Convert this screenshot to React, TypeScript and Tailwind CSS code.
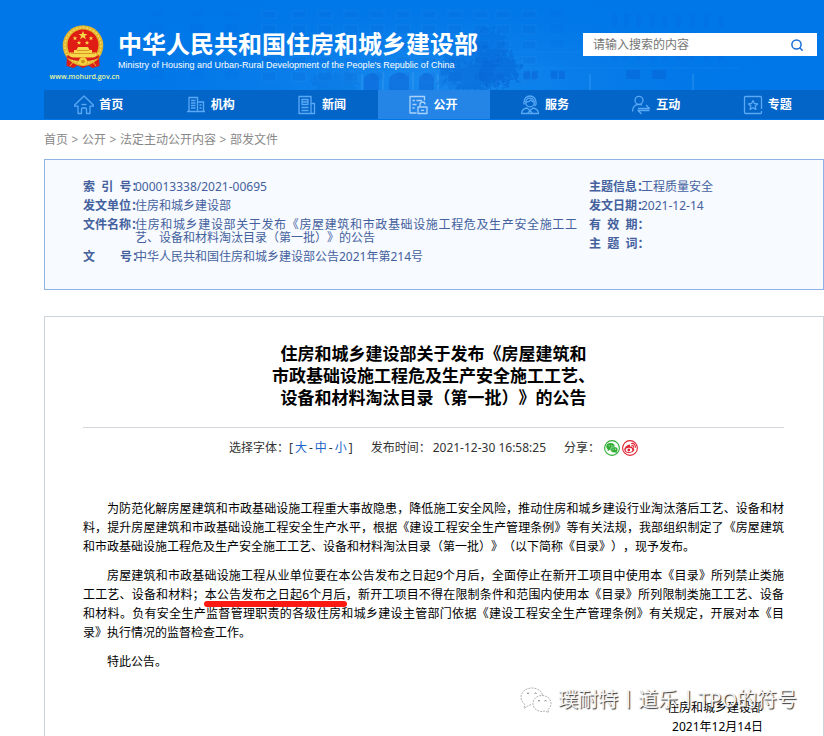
import React from 'react';

const iconBox = 'size-5 text-[#5aa9f5]';

const HomeIcon = () => (
    <svg className={iconBox} viewBox="0 0 20 20" fill="none" stroke="currentColor" strokeWidth="1.3" strokeLinejoin="round">
        <path d="M.7 10 10 1l9.300 9v1.200H16v7.300h-3.500V14a1 1 0 0 0-1-1h-3a1 1 0 0 0-1 1v4.500H4v-7.300H.7z" />
        <path d="M7.500 9.500h5" />
    </svg>
);

const OrgIcon = () => (
    <svg className={iconBox} viewBox="0 0 20 20" fill="none" stroke="currentColor" strokeWidth="1.3">
        <path d="M1 16.500h18M3 16.500V2.500h8.500v14M11.500 7h6v9.500" />
        <path d="M5 5.500h4.500M5 8h4.500M5 10.500h4.500M5 13h4.500M13.500 10h2M13.500 13h2" />
    </svg>
);

const NewsIcon = () => (
    <svg className={iconBox} viewBox="0 0 20 20" fill="none" stroke="currentColor" strokeWidth="1.3" strokeLinejoin="round">
        <path d="M2 1.500h12v17H2zM14 8.500h3.500v10H14" />
        <path d="M5 4.500h6v5H5zM5 7h6M4.500 12.500h7M4.500 15.500h7" />
    </svg>
);

const OpenIcon = () => (
    <svg className="size-5 text-[#a9d2fb]" viewBox="0 0 20 20" fill="none" stroke="currentColor" strokeWidth="1.3" strokeLinejoin="round">
        <path d="M16.500 5.500v-4H2v16.500h6.500" />
        <path d="M4.500 5.500h2.500M8.500 5.500h5.500M4.500 9.500h4M4.500 13h2" />
        <path d="M10 12h9v6.500h-9zM12 12V9.500a2.500 2.500 0 0 1 5 0M13 15.300h3" />
    </svg>
);

const ServiceIcon = () => (
    <svg className={iconBox} viewBox="0 0 20 20" fill="none" stroke="currentColor" strokeWidth="1.3" strokeLinejoin="round">
        <circle cx="10" cy="7.500" r="4.300" />
        <path d="M4 9.500V7a6 6 0 0 1 12 0v2.500l-1.500 1.500M6 7c3 0 4-1 5-2.200 1 1.500 2 2 3 2.200" />
        <path d="M1.500 18.500c.3-3.500 2.500-5 5.500-5.500l3 2.500 3-2.500c3 .5 5.200 2 5.500 5.500zM8 18l2-2.500 2 2.500" />
    </svg>
);

const InteractIcon = () => (
    <svg className={iconBox} viewBox="0 0 20 20" fill="none" stroke="currentColor" strokeWidth="1.3" strokeLinejoin="round">
        <circle cx="8" cy="5.300" r="4" />
        <path d="M1.500 16.500C1.500 12 4 9.500 8 9.300c1.200 0 2.200.3 3 .8" />
        <path d="M7 13.500h11.500L15 10M18.500 15.500H7l3.500 3.500" />
    </svg>
);

const TopicIcon = () => (
    <svg className={iconBox} viewBox="0 0 20 20" fill="none" stroke="currentColor" strokeWidth="1.3" strokeLinejoin="round">
        <path d="M18.500 14V2.500a1 1 0 0 0-1-1h-15a1 1 0 0 0-1 1v15a1 1 0 0 0 1 1h15a1 1 0 0 0 1-1V16" />
        <path d="m10 5.500 1.400 3 3.200.4-2.400 2.200.7 3.300-2.900-1.700-2.900 1.700.7-3.300-2.400-2.200 3.200-.4z" />
    </svg>
);

const navItems = [
    { name: '首页', icon: HomeIcon },
    { name: '机构', icon: OrgIcon },
    { name: '新闻', icon: NewsIcon },
    { name: '公开', icon: OpenIcon, active: true },
    { name: '服务', icon: ServiceIcon },
    { name: '互动', icon: InteractIcon },
    { name: '专题', icon: TopicIcon },
];

const crumbs = ['首页', '公开', '法定主动公开内容', '部发文件'];

const leftInfo = [
    { label: '索\u00a0\u00a0引\u00a0\u00a0号', value: '000013338/2021-00695' },
    { label: '发文单位', value: '住房和城乡建设部' },
    { label: '文件名称', value: '住房和城乡建设部关于发布《房屋建筑和市政基础设施工程危及生产安全施工工艺、设备和材料淘汰目录（第一批）》的公告' },
    { label: '文\u00a0\u00a0\u00a0\u00a0\u00a0\u00a0\u00a0\u00a0号', value: '中华人民共和国住房和城乡建设部公告2021年第214号' },
];

const rightInfo = [
    { label: '主题信息', value: '工程质量安全' },
    { label: '发文日期', value: '2021-12-14' },
    { label: '有\u00a0\u00a0效\u00a0\u00a0期', value: '' },
    { label: '主\u00a0\u00a0题\u00a0\u00a0词', value: '' },
];

const Emblem = () => (
    <svg className="h-11 w-[42px]" viewBox="0 0 42 44">
        <path d="M5 29 4.500 41l7 2 4-2.500 5.500 2.500 5.500-2.500 4 2.500 7-2L37 29z" fill="#d8201a" />
        <circle cx="21" cy="20.500" r="20.300" fill="#e3b52c" />
        <circle cx="21" cy="20.500" r="18" fill="none" stroke="#f3d964" strokeWidth="1.500" strokeDasharray="2 1.500" />
        <circle cx="21" cy="20" r="15.500" fill="#e01d14" />
        <path d="m21 6 1.200 3h3.200l-2.500 2 1 3.200-2.900-2-2.900 2 1-3.200-2.500-2h3.200z" fill="#f6d84a" />
        <g fill="#f6d84a">
            <path d="m13 11 .6 1.500h1.600l-1.200 1 .4 1.700-1.400-1-1.400 1 .4-1.700-1.200-1h1.600z" />
            <path d="m29 11 .6 1.500h1.600l-1.200 1 .4 1.700-1.400-1-1.400 1 .4-1.700-1.200-1h1.600z" />
            <path d="m17 15.500.6 1.500h1.600l-1.200 1 .4 1.700-1.400-1-1.400 1 .4-1.700-1.200-1h1.600z" />
            <path d="m25 15.500.6 1.500h1.600l-1.200 1 .4 1.700-1.400-1-1.400 1 .4-1.700-1.200-1h1.600z" />
            <path d="M16 22h10l1.500 3H30v2.500h4l1 5H7l1-5h4V25h2.500z" />
        </g>
        <path d="M9 28.500h24M15 25.500h12" stroke="#d0871b" strokeWidth=".8" />
        <path d="M5 31c4 3 8 3.500 12 3.500M37 31c-4 3-8 3.500-12 3.500" fill="none" stroke="#d8201a" strokeWidth="2.500" />
        <circle cx="21" cy="36.500" r="4.200" fill="#f3cf3e" />
        <circle cx="21" cy="36.500" r="1.800" fill="#c98f1c" />
        <path d="M8 41l4-5M34 41l-4-5" fill="none" stroke="#f0b63a" strokeWidth="1" />
    </svg>
);

const bays = [262, 292, 318, 344, 370, 396, 422, 448, 474, 496, 522];
const smallBays = [612, 624, 636, 650, 662, 676, 690, 704, 718];

const Building = () => (
    <svg className="absolute inset-y-0 left-0 h-[90px] w-[824px]" viewBox="0 0 824 90">
        <defs>
            <radialGradient id="glow">
                <stop offset="0" stopColor="#2a97f2" stopOpacity=".6" />
                <stop offset="1" stopColor="#0077e8" stopOpacity="0" />
            </radialGradient>
            <filter id="leaves" x="-20%" y="-20%" width="140%" height="140%">
                <feTurbulence type="fractalNoise" baseFrequency=".2" numOctaves="3" seed="4" />
                <feDisplacementMap in="SourceGraphic" scale="24" xChannelSelector="R" yChannelSelector="G" />
                <feGaussianBlur stdDeviation=".7" />
            </filter>
        </defs>
        <ellipse cx="430" cy="80" rx="360" ry="95" fill="url(#glow)" />
        <path d="M150 52h430M220 68h520" stroke="#3fa2f4" strokeOpacity=".15" />
        {bays.map((x) => (
            <g key={x} fill="#0d63d6" fillOpacity=".16" stroke="#45a6f5" strokeOpacity=".16">
                <rect x={x} y="11" width="14" height="7" />
                <rect x={x} y="25" width="14" height="9" />
                <rect x={x} y="41" width="14" height="8" />
                <rect x={x} y="57" width="14" height="7" />
                <rect x={x} y="72" width="14" height="9" />
            </g>
        ))}
        {[550, 150, 190, 225].map((x) => (
            <g key={x} fill="#0d63d6" fillOpacity=".1">
                <rect x={x} y="10" width="14" height="7" />
                <rect x={x} y="24" width="14" height="9" />
                <rect x={x} y="40" width="14" height="8" />
                <rect x={x} y="70" width="14" height="9" />
            </g>
        ))}
        {smallBays.map((x) => (
            <g key={x} fill="#0d63d6" fillOpacity=".18">
                <rect x={x} y="14" width="5" height="13" />
                <rect x={x} y="56" width="5" height="5" />
            </g>
        ))}
        <g fill="#0b5fd2" fillOpacity=".45">
            <path d="M364 90V78q8-10 15 0v12zM389 90V78q10-11 20 0v12zM419 90V78q8-10 15 0v12z" />
            <rect x="524" y="71" width="6" height="8" />
            <rect x="532" y="71" width="6" height="8" />
            <rect x="551" y="71" width="6" height="8" />
            <rect x="559" y="71" width="6" height="8" />
            <rect x="626" y="70" width="14" height="9" />
            <rect x="652" y="70" width="14" height="9" />
        </g>
        <path d="M362 90V74M383 90V72M413 90V72M438 90V74M590 90V74M693 90V74" stroke="#4fabf5" strokeOpacity=".25" strokeWidth="2" />
        <g filter="url(#leaves)" fill="#0a5bcb">
            <ellipse cx="480" cy="68" rx="40" ry="22" fillOpacity=".25" />
            <ellipse cx="490" cy="48" rx="16" ry="20" fillOpacity=".22" />
            <ellipse cx="468" cy="78" rx="32" ry="14" fillOpacity=".22" />
            <ellipse cx="500" cy="72" rx="22" ry="12" fillOpacity=".2" />
            <ellipse cx="334" cy="82" rx="24" ry="12" fillOpacity=".16" />
        </g>
    </svg>
);

const WechatShare = () => (
    <svg className="size-4" viewBox="0 0 16 16">
        <circle cx="8" cy="8" r="7.400" fill="#fff" stroke="#2fae35" strokeWidth="1.100" />
        <ellipse cx="6.500" cy="6.500" rx="4.200" ry="3.500" fill="#2fae35" />
        <path d="m3.300 11.300 1-2.500 2 1z" fill="#2fae35" />
        <ellipse cx="10.200" cy="9.700" rx="3.700" ry="3" fill="#2fae35" stroke="#fff" strokeWidth=".5" />
        <path d="m12.700 13.300-2-1.200 2-1z" fill="#2fae35" />
        <path d="M5.200 5.800h.1M7.800 5.800h.1M9 9.200h.1M11.400 9.200h.1" stroke="#fff" strokeWidth=".9" strokeLinecap="round" />
    </svg>
);

const WeiboShare = () => (
    <svg className="size-4" viewBox="0 0 16 16" fill="none">
        <circle cx="8" cy="8" r="7.400" fill="#fff" stroke="#e02433" strokeWidth="1.100" />
        <path d="M7.500 4.500C5 5 2.300 7.500 2.300 9.700c0 2 2.200 3.300 4.700 3.300 3 0 5.300-1.600 5.300-3.400 0-1-.9-1.600-1.800-1.800.3-1.200-.8-1.600-2.600-1 .3-1 .3-2-.4-2.300z" fill="#e02433" />
        <ellipse cx="7" cy="9.900" rx="3.300" ry="2.100" fill="#fff" />
        <circle cx="6.800" cy="10" r="1.400" fill="#e02433" />
        <path d="M9.500 3.500c2.500-.5 4.300 1.500 3.700 4M9.800 5.300c1.300-.1 2 .7 1.700 1.900" stroke="#e02433" strokeWidth="1.100" strokeLinecap="round" />
    </svg>
);

const InfoRow: React.FC<{ label: string; value: string }> = ({ label, value }) => (
    <div className="flex py-[3px]">
        <dt className="w-[52px] shrink-0 whitespace-nowrap font-bold">{label}：</dt>
        <dd className="flex-1 text-justify">{value}</dd>
    </div>
);

const App: React.FC = () => {
    return (
        <div className="flex min-h-screen flex-col bg-white font-['Noto_Sans','Noto_Sans_CJK_SC',sans-serif] text-xs [text-spacing-trim:space-all]">
            <header className="relative overflow-hidden bg-[#0077e8] pl-11">
                <Building />
                <div className="relative flex h-[90px] items-start justify-between pr-[7px]">
                    <div className="flex">
                        <div className="flex w-[73px] flex-col items-center pt-[25px]">
                            <div className="flex h-11 justify-center pl-1"><Emblem /></div>
                            <a href="#" className="pl-2 font-['Open_Sans',sans-serif] text-[7px] leading-[15px] font-semibold text-[#e6f5a0]">www.mohurd.gov.cn</a>
                        </div>
                        <div className="pt-7 pl-px text-white">
                            <h1 className="text-2xl leading-[31px] font-bold whitespace-nowrap">中华人民共和国住房和城乡建设部</h1>
                            <p className="font-['Liberation_Sans',sans-serif] text-[9px] leading-3 whitespace-nowrap">Ministry of Housing and Urban-Rural Development of the People's Republic of China</p>
                        </div>
                    </div>
                    <form className="mt-[33px] flex h-[23px] w-[234px] bg-white" onSubmit={(e) => e.preventDefault()}>
                        <input type="text" aria-label="搜索" placeholder="请输入搜索的内容" className="min-w-0 flex-1 px-[10px] outline-none placeholder:text-[#757575]" />
                        <button type="submit" aria-label="提交搜索" className="flex w-10 items-center justify-center">
                            <svg className="size-3 text-[#1a6fd4]" viewBox="0 0 12 12" fill="none" stroke="currentColor" strokeWidth="1.500" strokeLinecap="round">
                                <circle cx="5.500" cy="5.500" r="4.600" />
                                <path d="m9 9 2.200 2.200" />
                            </svg>
                        </button>
                    </form>
                </div>
                <nav className="relative mb-px grid h-[29px] grid-cols-7 bg-[#0465c8]">
                    {navItems.map((item) => (
                        <a key={item.name} href="#" className={`flex items-center justify-center gap-[5px] pr-0.5 font-bold text-white ${item.active ? 'bg-[#2585e6]' : ''}`}>
                            <item.icon />
                            {item.name}
                        </a>
                    ))}
                </nav>
            </header>

            <div className="flex flex-1 flex-col pl-11">
                <div className="flex py-[10px] leading-[19px] text-[#888888]">
                    {crumbs.map((crumb, i) => (
                        <React.Fragment key={crumb}>
                            {i > 0 && <span className="w-[14px] text-center">&gt;</span>}
                            <a href="#">{crumb}</a>
                        </React.Fragment>
                    ))}
                </div>

                <section className="flex h-[131px] border border-[#8db2e3] bg-[#f7faff] pt-[17px] pr-10 pl-[38px] leading-[13px] text-[#44619d]">
                    <dl className="mr-3 flex-1">
                        {leftInfo.map((row) => <InfoRow key={row.label} {...row} />)}
                    </dl>
                    <dl className="w-[194px]">
                        {rightInfo.map((row) => <InfoRow key={row.label} {...row} />)}
                    </dl>
                </section>

                <article className="relative mt-[26px] flex-1 border border-b-0 border-[#ccd3dc] pt-[26px] pr-[39px] pl-[38px] text-black">
                    <h2 className="pb-[18px] text-center text-[17px] leading-[22px] font-bold">
                        住房和城乡建设部关于发布《房屋建筑和<br />
                        市政基础设施工程危及生产安全施工工艺、<br />
                        设备和材料淘汰目录（第一批）》的公告
                    </h2>
                    <div className="flex items-center justify-center border-t border-[#d3d6da] pt-[10px] leading-[19px] text-[#333333]">
                        <div className="mr-[18px] flex gap-0.5">
                            <span>选择字体：[</span>
                            <button type="button" className="text-[#1a66c8]">大</button>
                            <span>-</span>
                            <button type="button" className="text-[#1a66c8]">中</button>
                            <span>-</span>
                            <button type="button" className="text-[#1a66c8]">小</button>
                            <span>]</span>
                        </div>
                        <span className="mr-[18px]">发布时间：<span className="ml-0.5">2021-12-30 16:58:25</span></span>
                        <span className="mr-1">分享：</span>
                        <a href="#" aria-label="微信" className="mr-0.5"><WechatShare /></a>
                        <a href="#" aria-label="微博"><WeiboShare /></a>
                    </div>

                    <div className="space-y-[10px] pt-[42px] text-justify leading-[19px]">
                        <p className="indent-6">为防范化解房屋建筑和市政基础设施工程重大事故隐患，降低施工安全风险，推动住房和城乡建设行业淘汰落后工艺、设备和材料，提升房屋建筑和市政基础设施工程安全生产水平，根据《建设工程安全生产管理条例》等有关法规，我部组织制定了《房屋建筑和市政基础设施工程危及生产安全施工工艺、设备和材料淘汰目录（第一批）》（以下简称《目录》），现予发布。</p>
                        <p className="indent-6">房屋建筑和市政基础设施工程从业单位要在本公告发布之日起9个月后，全面停止在新开工项目中使用本《目录》所列禁止类施工工艺、设备和材料；<span className="relative after:absolute after:-inset-x-px after:-bottom-1 after:h-[6px] after:rounded-full after:bg-[#fb1a12]">本公告发布之日起6个月后</span>，新开工项目不得在限制条件和范围内使用本《目录》所列限制类施工工艺、设备和材料。负有安全生产监督管理职责的各级住房和城乡建设主管部门依据《建设工程安全生产管理条例》有关规定，开展对本《目录》执行情况的监督检查工作。</p>
                        <p className="indent-6">特此公告。</p>
                    </div>
                    <div className="pt-[27px] pr-[21px] text-right leading-[19px]">
                        <p>住房和城乡建设部</p>
                        <p>2021年12月14日</p>
                    </div>

                    <div className="absolute right-[26px] bottom-[20px] flex items-center gap-[6px] text-xl leading-8 whitespace-nowrap text-[#f4f4f4] [text-shadow:1px_1px_1px_#333333]">
                        <svg className="h-7 w-8" viewBox="0 0 32 28" fill="none" stroke="#a0a0a0" strokeWidth=".8" strokeDasharray="2 1">
                            <path d="M11 18.500 7 20.500l-3 2 1-4C2.500 16.500 1 14 1 11 1 6 6 2 12 2c5.500 0 9.500 3 10.500 7" />
                            <path d="M22 9.500c5 0 9 3.300 9 8 0 2.500-1.200 4.500-3 6l.5 3-3.500-1.500c-6 2-12-2-12-7.500 0-4.700 4-8 9-8z" fill="#fff" />
                            <path d="M7 7.500q1-1 2 0M14.500 7.500q1-1 2 0M18 15q1-1 2 0M24.500 15q1-1 2 0" stroke="#555" strokeDasharray="none" />
                        </svg>
                        <span>璞耐特丨道乐丨TPO的符号</span>
                    </div>
                </article>
            </div>
        </div>
    );
};

export default App;
